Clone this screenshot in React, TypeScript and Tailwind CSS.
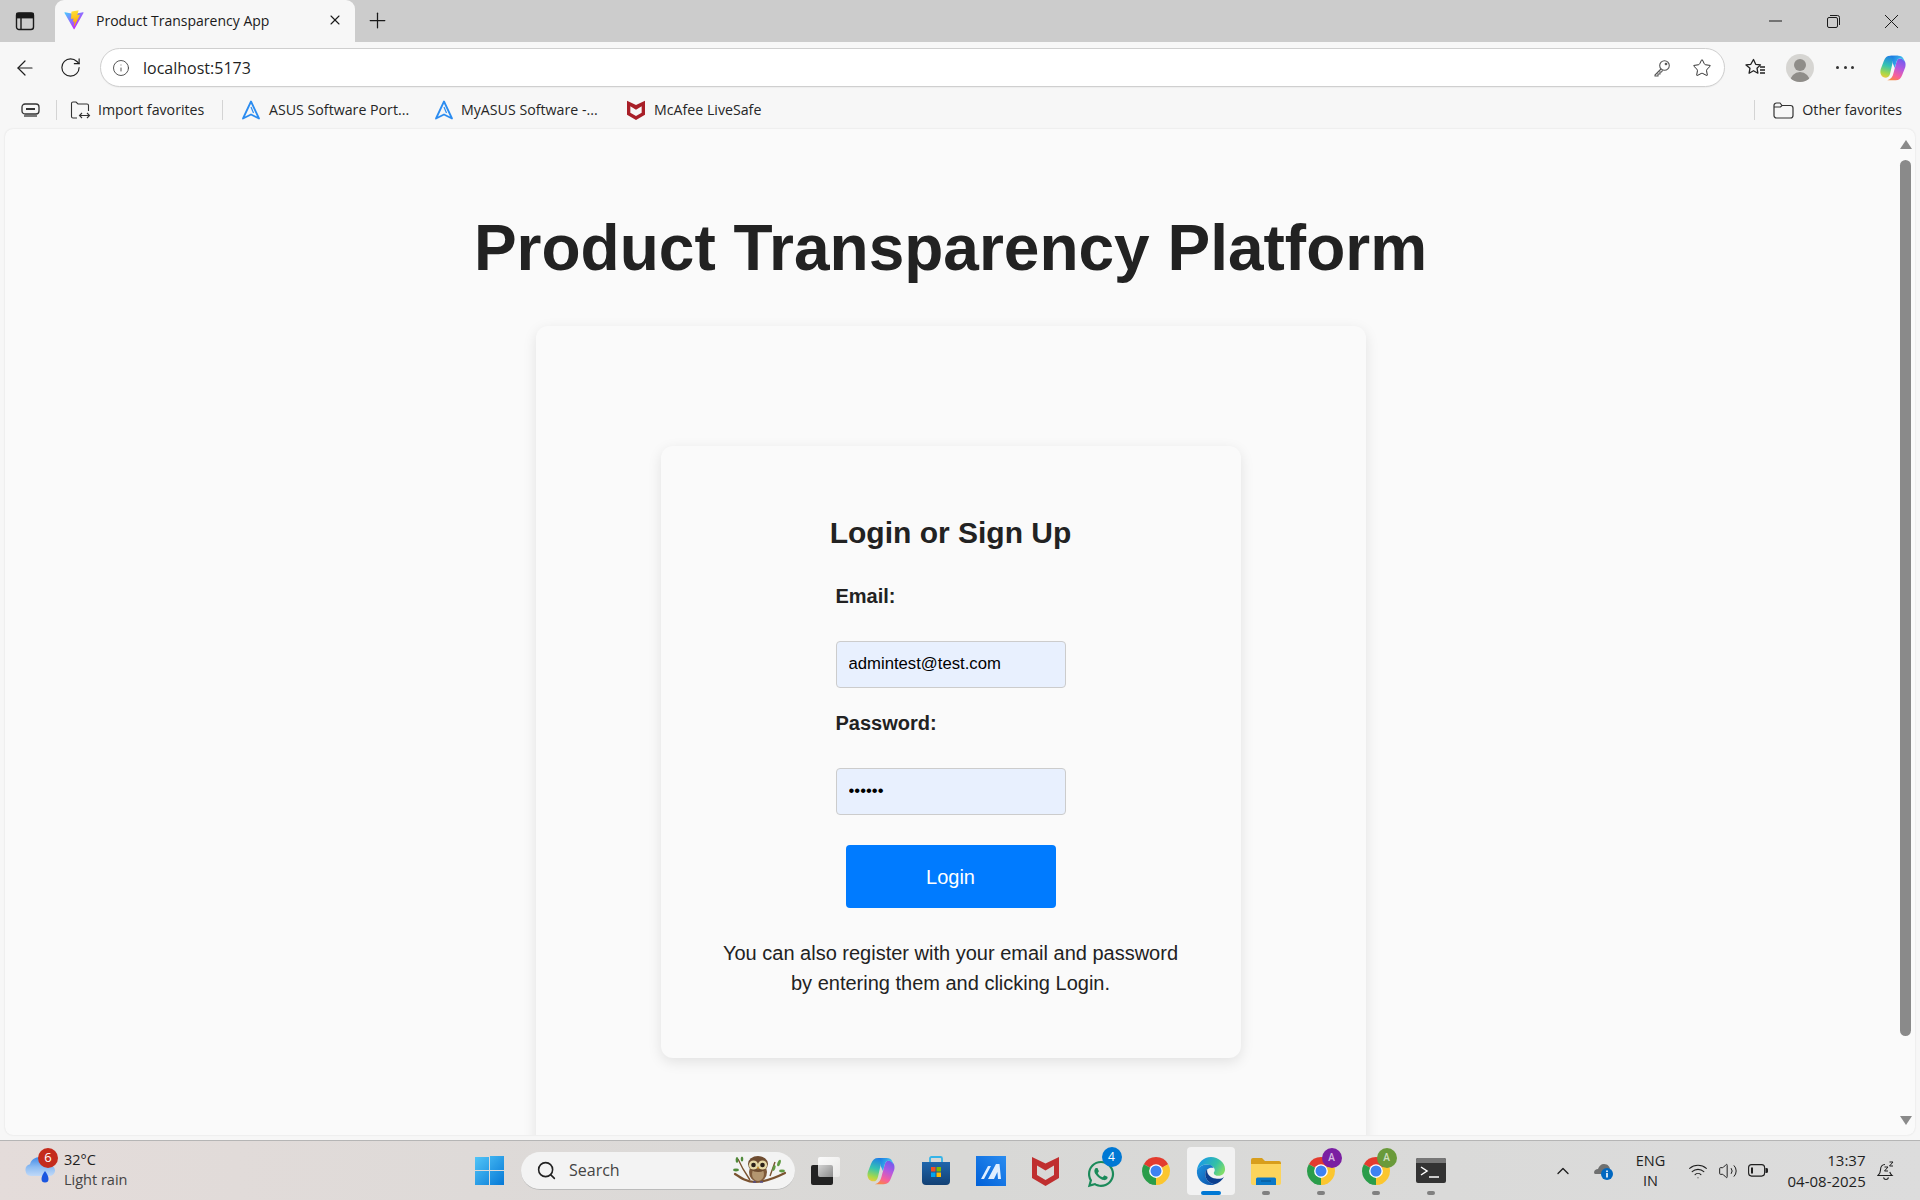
import { ArrowLeft, ChevronUp, Info, Plus, RotateCw, Search, Star, Volume2, Wifi, X } from 'lucide-react';
import { FaWhatsapp } from 'react-icons/fa';

const uiFont = 'font-["Open_Sans",sans-serif]';

function ViteLogo() {
  return (
    <svg width="20" height="20" viewBox="0 0 410 404" fill="none">
      <defs>
        <linearGradient id="vite-a" x1="6" y1="33" x2="235" y2="344" gradientUnits="userSpaceOnUse">
          <stop stopColor="#41D1FF" />
          <stop offset="1" stopColor="#BD34FE" />
        </linearGradient>
        <linearGradient id="vite-b" x1="194" y1="8" x2="236" y2="292" gradientUnits="userSpaceOnUse">
          <stop stopColor="#FFEA83" />
          <stop offset="0.08" stopColor="#FFDD35" />
          <stop offset="1" stopColor="#FFA800" />
        </linearGradient>
      </defs>
      <path d="M399.641 59.5246L215.643 388.545C211.844 395.338 202.084 395.378 198.228 388.618L10.5817 59.5563C6.38087 52.1896 12.6802 43.2665 21.0281 44.7586L205.223 77.6824C206.398 77.8924 207.601 77.8904 208.776 77.6763L389.119 44.8058C397.439 43.2894 403.768 52.1434 399.641 59.5246Z" fill="url(#vite-a)" />
      <path d="M292.965 1.5744L156.801 28.2552C154.563 28.6937 152.906 30.5903 152.771 32.8664L144.395 174.33C144.198 177.662 147.258 180.248 150.51 179.498L188.42 170.749C191.967 169.931 195.172 173.055 194.443 176.622L183.18 231.775C182.422 235.487 185.907 238.661 189.532 237.56L212.947 230.446C216.577 229.344 220.065 232.527 219.297 236.242L201.398 322.875C200.278 328.294 207.486 331.249 210.492 326.603L212.5 323.5L323.454 102.072C325.312 98.3645 322.108 94.137 318.036 94.9228L279.014 102.454C275.347 103.161 272.227 99.746 273.262 96.1583L298.731 7.86689C299.767 4.27314 296.636 0.855181 292.965 1.5744Z" fill="url(#vite-b)" />
    </svg>
  );
}

function CopilotLogo({ size, id }: { size: number; id: string }) {
  return (
    <svg width={size} height={size} viewBox="0 0 32 32" fill="none">
      <defs>
        <linearGradient id={`${id}-a`} x1="12" y1="2" x2="5" y2="27" gradientUnits="userSpaceOnUse">
          <stop stopColor="#1f7fe8" />
          <stop offset="0.45" stopColor="#35c4b0" />
          <stop offset="0.8" stopColor="#a8d848" />
          <stop offset="1" stopColor="#f0c83c" />
        </linearGradient>
        <linearGradient id={`${id}-b`} x1="26" y1="5" x2="14" y2="30" gradientUnits="userSpaceOnUse">
          <stop stopColor="#6a5cf0" />
          <stop offset="0.4" stopColor="#b458e0" />
          <stop offset="0.75" stopColor="#f8609a" />
          <stop offset="1" stopColor="#f88a3c" />
        </linearGradient>
        <linearGradient id={`${id}-c`} x1="13" y1="2" x2="27" y2="9" gradientUnits="userSpaceOnUse">
          <stop stopColor="#1670e0" />
          <stop offset="1" stopColor="#46c8f0" />
        </linearGradient>
      </defs>
      <path d="M13 2C9 2 7 4 5.500 8L2 17c-1.500 5 1 10 6 10 2.500 0 4-1.500 4.800-5L15.500 10C16 6 18 3 22 2z" fill={`url(#${id}-a)`} />
      <path d="M19 30c4 0 6-2 7.500-6l3.500-9c1.500-5-1-10-6-10-2.500 0-3.500 2-4.300 5L16.500 22c-.8 4-3 7-7 8z" fill={`url(#${id}-b)`} />
      <path d="M13 2h9c3 0 5 1 6 3.500.4 1 .8 2 1.200 3.500C28 6.500 26 5 24 5c-2.500 0-3.500 2-4.300 5L18 16l-2.500-6C16 6 16.500 3 13 2z" fill={`url(#${id}-c)`} />
    </svg>
  );
}

function ChromeLogo() {
  return (
    <svg width="30" height="30" viewBox="0 0 48 48">
      <path d="M24 24 L43.5 13 A22.5 22.5 0 0 0 4.5 13 Z" fill="#e33b2e" />
      <path d="M24 24 L4.5 13 A22.5 22.5 0 0 0 24 46.5 Z" fill="#2a9d4a" />
      <path d="M24 24 L24 46.5 A22.5 22.5 0 0 0 43.5 13 Z" fill="#fbc62f" />
      <circle cx="24" cy="24" r="11" fill="#fff" />
      <circle cx="24" cy="24" r="8.8" fill="#3e82f1" />
    </svg>
  );
}

function EdgeLogo() {
  return (
    <svg width="30" height="30" viewBox="0 0 32 32" fill="none">
      <defs>
        <linearGradient id="edge-a" x1="6" y1="4" x2="28" y2="18" gradientUnits="userSpaceOnUse">
          <stop stopColor="#1b9de2" />
          <stop offset="0.6" stopColor="#35c1a5" />
          <stop offset="1" stopColor="#7fdc6a" />
        </linearGradient>
        <linearGradient id="edge-b" x1="4" y1="12" x2="22" y2="30" gradientUnits="userSpaceOnUse">
          <stop stopColor="#1b8ad8" />
          <stop offset="1" stopColor="#0b4fa8" />
        </linearGradient>
      </defs>
      <path d="M1 15C2 7 8 1 16 1c8 0 15 6 15 13 0 4-3 7-7 7-3 0-5-1-5-3 0-1 1-1 1-3 0-3-4-6-8-6-5 0-9 2-11 6z" fill="url(#edge-a)" />
      <path d="M1 15c2-4 6-6 11-6 3 0 6 1 7 4-3-1-8 0-9 5-1 6 4 11 10 12-2 1-3 1-5 1C7 31 0 24 1 15z" fill="url(#edge-b)" />
      <path d="M20 30c-6-1-11-6-10-12 0-2 1-3 2-4-1 5 3 9 9 10 3 1 7 0 9-2-2 4-6 7-10 8z" fill="#0c3f8f" />
    </svg>
  );
}

// red shield with the M notch, used in the favorites bar and the taskbar
function McAfeeLogo({ size, color }: { size: number; color: string }) {
  return (
    <svg width={size * 0.9} height={size} viewBox="0 0 27 30">
      <path fillRule="evenodd" d="M0 1l13.500 6.500L27 1v21L13.500 30 0 22zM5 9.500V19l8.500 5 8.500-5V9.500l-8.500 5z" fill={color} />
    </svg>
  );
}

function ChromeBadge({ color }: { color: string }) {
  return (
    <div className="relative flex h-[30px] w-[30px] items-center justify-center">
      <ChromeLogo />
      <span className={`absolute top-[-8px] right-[-6px] flex h-[20px] w-[20px] items-center justify-center rounded-full text-[10px] font-semibold text-white/70 ${color}`}>A</span>
    </div>
  );
}

function AsusMark() {
  return (
    <svg width="20" height="20" viewBox="0 0 20 20" fill="none" stroke="#2b8cf0" strokeWidth="1.8" strokeLinejoin="round">
      <path d="M10 1.500 18 18.500 10 14.500 2 18.500Z" />
      <path d="M10 7 12.500 13" strokeWidth="1.2" />
    </svg>
  );
}

function OwlDoodle() {
  return (
    <svg width="54" height="30" viewBox="0 0 54 30" fill="none">
      <path d="M2 19c6 4 12 8 20 8 10 0 20-4 30-9" stroke="#7a5230" strokeWidth="2.200" strokeLinecap="round" />
      <path d="M5 4l5 10 7 11M42 7l-5 14" stroke="#7a5230" strokeWidth="1.400" />
      <ellipse cx="4" cy="5" rx="1.400" ry="3" fill="#4f8a3a" />
      <ellipse cx="9" cy="4" rx="1.300" ry="2.600" fill="#4f8a3a" />
      <ellipse cx="3" cy="15" rx="3" ry="1.400" fill="#4f8a3a" />
      <ellipse cx="46" cy="8" rx="1.500" ry="3.500" fill="#5f9a42" transform="rotate(20 46 8)" />
      <ellipse cx="41" cy="13" rx="1.400" ry="3" fill="#5f9a42" transform="rotate(20 41 13)" />
      <ellipse cx="49" cy="16" rx="3" ry="1.400" fill="#5f9a42" />
      <ellipse cx="25" cy="17" rx="9" ry="10" fill="#7f5a3a" />
      <ellipse cx="25" cy="19" rx="6" ry="7" fill="#b39670" />
      <ellipse cx="25" cy="9" rx="10" ry="8" fill="#6e4c30" />
      <circle cx="20.500" cy="10" r="4.600" fill="#e6d9a6" />
      <circle cx="29.500" cy="10" r="4.600" fill="#e6d9a6" />
      <circle cx="20.500" cy="10" r="2.300" fill="#2a2018" />
      <circle cx="29.500" cy="10" r="2.300" fill="#2a2018" />
      <path d="M24 12h2l-1 3z" fill="#d8a030" />
      <path d="M20 27h3M27 27h3" stroke="#54508c" strokeWidth="1.600" />
    </svg>
  );
}

function TaskbarSlot({ children, active, running }: { children: React.ReactNode; active?: boolean; running?: boolean }) {
  return (
    <div className="relative flex h-[60px] w-[55px] items-center justify-center">
      {active && <div className="absolute top-[6px] left-[3.5px] h-[48px] w-[48px] rounded-[4px] bg-[#f2f2f2]" />}
      <div className="relative">{children}</div>
      {active && <div className="absolute top-[50px] left-[17.5px] h-[4px] w-[20px] rounded-full bg-[#0078d4]" />}
      {running && <div className="absolute top-[50px] left-[23.5px] h-[4px] w-[8px] rounded-full bg-[#808080]" />}
    </div>
  );
}

function BrowserChrome() {
  return (
    <>
      {/* tab strip */}
      <div className="flex h-[42px] items-stretch bg-[#cccccc] text-[#1a1a1a]">
        <div className="flex w-[55px] items-center pl-[15px]">
          <svg width="20" height="20" viewBox="0 0 20 20" fill="none" stroke="#1a1a1a" strokeWidth="1.4">
            <rect x="1.500" y="2" width="17" height="16.500" rx="2.500" />
            <path d="M1.500 6.500h17M6 6.500v12" />
            <rect x="2" y="2.500" width="16" height="4" fill="#1a1a1a" />
          </svg>
        </div>
        <div className="flex w-[300px] items-center rounded-t-[9px] bg-[#f7f7f7] pb-[2px] pl-[9px]">
          <ViteLogo />
          <span className={`ml-[12px] text-[14px] ${uiFont}`}>Product Transparency App</span>
          <X className="ml-auto mr-[12px]" size={16} strokeWidth={1.6} />
        </div>
        <div className="flex w-[44px] items-center justify-center pb-[2px]">
          <Plus size={25} strokeWidth={1.2} />
        </div>
        <div className="ml-auto flex items-center">
          <svg className="mr-[45px]" width="13" height="2" viewBox="0 0 13 2"><path d="M0 1h13" stroke="#1a1a1a" /></svg>
          <svg className="mr-[45px]" width="13" height="13" viewBox="0 0 13 13" fill="none" stroke="#1a1a1a">
            <rect x="0.500" y="2.500" width="10" height="10" rx="1.500" />
            <path d="M3 .5h7.500a2 2 0 0 1 2 2V10" />
          </svg>
          <svg className="mr-[22px]" width="13" height="13" viewBox="0 0 13 13" stroke="#1a1a1a"><path d="M0 0l13 13M13 0L0 13" /></svg>
        </div>
      </div>

      {/* address bar */}
      <div className="flex h-[50px] items-center bg-[#f7f7f7] pt-[1px]">
        <ArrowLeft className="ml-[13px]" size={24} strokeWidth={1.2} color="#1f1f1f" />
        <RotateCw className="ml-[22px]" size={23} strokeWidth={1.2} color="#1f1f1f" />
        <div className="ml-[18px] flex h-[39px] w-[1625px] items-center rounded-full border border-[#cfcfcf] bg-white shadow-[0_1px_1px_rgba(0,0,0,0.04)]">
          <Info className="ml-[11px]" size={18} strokeWidth={1.2} color="#444" />
          <span className={`ml-[13px] text-[16px] text-[#1f1f1f] ${uiFont}`}>localhost:5173</span>
          <svg className="ml-auto" width="18" height="18" viewBox="0 0 18 18" fill="none" stroke="#555" strokeWidth="1.1">
            <circle cx="11.500" cy="6.500" r="4.800" />
            <circle cx="13" cy="5" r="0.800" />
            <path d="M8 10 2 16v1h3v-2h2v-2h1.500l1-1.600" />
          </svg>
          <Star className="ml-[21px] mr-[12px]" size={20} strokeWidth={1.2} color="#333" />
        </div>
        <svg className="ml-[20px]" width="21" height="20" viewBox="0 0 21 20" fill="none" stroke="#222" strokeWidth="1.3" strokeLinejoin="round">
          <path d="M8.500 1.500l2.200 4.800 4.800.6-3.500 3.300.9 5-4.400-2.500-4.400 2.500.9-5L1 6.900l4.800-.6z" />
          <path d="M15 9h5M15 12h5M15 15h5" />
        </svg>
        <div className="relative ml-[20px] h-[28px] w-[28px] overflow-hidden rounded-full bg-[#d6d5d2]">
          <div className="absolute top-[5px] left-[8px] h-[12px] w-[12px] rounded-full bg-[#8f8d89]" />
          <div className="absolute top-[18px] left-[4px] h-[14px] w-[20px] rounded-t-full bg-[#8f8d89]" />
        </div>
        <div className="ml-[22px] flex w-[18px] justify-between">
          <span className="h-[3px] w-[3px] rounded-full bg-[#333]" />
          <span className="h-[3px] w-[3px] rounded-full bg-[#333]" />
          <span className="h-[3px] w-[3px] rounded-full bg-[#333]" />
        </div>
        <div className="ml-[25px]">
          <CopilotLogo size={28} id="cp-top" />
        </div>
      </div>

      {/* favorites bar */}
      <div className={`flex h-[37px] items-center bg-[#f7f7f7] pb-[2px] text-[14.2px] text-[#262626] ${uiFont}`}>
        <svg className="ml-[21px]" width="19" height="14" viewBox="0 0 19 14" fill="none" stroke="#333" strokeWidth="1.3">
          <rect x="1" y="1" width="17" height="10" rx="3" />
          <path d="M5 6h9" strokeWidth="2" />
          <path d="M3 13h13" />
        </svg>
        <div className="ml-[16px] h-[20px] w-px bg-[#d4d4d4]" />
        <svg className="ml-[13px]" width="21" height="20" viewBox="0 0 21 20" fill="none" stroke="#333" strokeWidth="1.1">
          <path d="M7 18H3a1.500 1.500 0 0 1-1.500-1.500v-13A1.500 1.500 0 0 1 3 2h3l2 2h9a1.500 1.500 0 0 1 1.500 1.500V11" />
          <path d="M10 15.500h9M12 13l-2.500 2.500L12 18M17 13l2.500 2.500L17 18" />
        </svg>
        <span className="ml-[7px] w-[105px] whitespace-nowrap">Import favorites</span>
        <div className="ml-[19px] h-[20px] w-px bg-[#d4d4d4]" />
        <div className="ml-[18px]"><AsusMark /></div>
        <span className="ml-[8px] w-[140px] whitespace-nowrap">ASUS Software Port...</span>
        <div className="ml-[25px]"><AsusMark /></div>
        <span className="ml-[7px] w-[140px] whitespace-nowrap">MyASUS Software -...</span>
        <div className="ml-[25px] flex w-[20px] justify-center"><McAfeeLogo size={20} color="#a81f28" /></div>
        <span className="ml-[8px] whitespace-nowrap">McAfee LiveSafe</span>
        <div className="ml-auto h-[20px] w-px bg-[#d4d4d4]" />
        <svg className="ml-[18px]" width="21" height="18" viewBox="0 0 21 18" fill="none" stroke="#333" strokeWidth="1.2">
          <path d="M1 4.500A2.500 2.500 0 0 1 3.500 2H7l2 2.500h8.500A2.500 2.500 0 0 1 20 7v7.500a2.500 2.500 0 0 1-2.500 2.500h-14A2.500 2.500 0 0 1 1 14.500z" />
          <path d="M1 6h6.500L9 4.500" />
        </svg>
        <span className="ml-[8px] mr-[18px] whitespace-nowrap">Other favorites</span>
      </div>
    </>
  );
}

function LoginCard() {
  return (
    <div className="mx-auto mt-[120px] flex h-[612px] w-[580px] flex-col items-center rounded-[12px] bg-[#fafafa] shadow-[0_4px_14px_rgba(0,0,0,0.1)]">
      <h2 className="mt-[68px] text-[30px] leading-[38px] font-bold text-[#222]">Login or Sign Up</h2>
      <form className="mt-[32px] flex w-[230px] flex-col">
        <label className="text-[20px] leading-[24px] font-bold text-[#222]">Email:</label>
        <input
          readOnly
          value="admintest@test.com"
          className="mt-[33px] h-[47px] rounded-[4px] border border-[#ccc] bg-[#e8f0fe] pb-[2px] pl-[12px] text-[16.7px] text-black outline-none"
        />
        <label className="mt-[23px] text-[20px] leading-[24px] font-bold text-[#222]">Password:</label>
        <input
          readOnly
          type="password"
          value="123456"
          className="mt-[33px] h-[47px] rounded-[4px] border border-[#ccc] bg-[#e8f0fe] pb-[2px] pl-[12px] text-[16.7px] text-black outline-none"
        />
        <button type="button" className="mx-auto mt-[30px] h-[63px] w-[210px] rounded-[4px] bg-[#007bff] text-[20px] text-white">
          Login
        </button>
      </form>
      <p className="mt-[30px] w-[470px] text-center text-[20px] leading-[30px] text-[#222]">
        You can also register with your email and password by entering them and clicking Login.
      </p>
    </div>
  );
}

function PageArea() {
  return (
    <div className="mx-[5px] mb-[5px] flex h-[1006px] overflow-hidden rounded-[8px] bg-[#fafafa] shadow-[0_0_2px_rgba(0,0,0,0.12)] font-['Liberation_Sans',sans-serif]">
      <div className="h-[1006px] flex-1 overflow-hidden">
        <h1 className="mt-[81px] text-center text-[64px] leading-[77px] font-bold text-[#222]">Product Transparency Platform</h1>
        <div className="mx-auto mt-[39px] h-[900px] w-[830px] overflow-hidden rounded-[12px] bg-[#fafafa] px-[10px] shadow-[0_4px_14px_rgba(0,0,0,0.1)]">
          <LoginCard />
        </div>
      </div>
      <div className="flex w-[19px] flex-col items-center">
        <div className="mt-[11px] h-0 w-0 border-x-[6.5px] border-b-[9px] border-x-transparent border-b-[#8a8a8a]" />
        <div className="mt-[11px] h-[876px] w-[11px] rounded-full bg-[#8a8a8a]" />
        <div className="mt-[80px] h-0 w-0 border-x-[6.5px] border-t-[9px] border-x-transparent border-t-[#8a8a8a]" />
      </div>
    </div>
  );
}

function Taskbar() {
  return (
    <div className={`flex h-[60px] items-center border-t border-[#b5b5b5] bg-gradient-to-r from-[#e4dcda] via-[#d8d8d6] to-[#dcdcdc] text-[#1f1f1f] ${uiFont}`}>
      {/* weather */}
      <div className="relative ml-[25px] w-[30px]">
        <svg width="30" height="27" viewBox="0 0 30 27">
          <defs>
            <linearGradient id="cloud" x1="0" y1="0" x2="0" y2="20" gradientUnits="userSpaceOnUse">
              <stop stopColor="#3f8ae8" />
              <stop offset="0.5" stopColor="#8dbcf2" />
              <stop offset="1" stopColor="#c6dcf8" />
            </linearGradient>
          </defs>
          <path d="M6 19a6 6 0 0 1-1-11.800C6 3 10 0 15 0c5 0 9 3 10 8a5.500 5.500 0 0 1-1 11z" fill="url(#cloud)" />
          <path d="M20 14c2 3 3.500 5 3.500 8a3.500 3.500 0 0 1-7 0c0-3 1.500-5 3.500-8z" fill="#1a56e0" />
        </svg>
        <span className="absolute top-[-9px] left-[13px] flex h-[20px] w-[20px] items-center justify-center rounded-full bg-[#c42b1c] text-[13px] text-white">6</span>
      </div>
      <div className="ml-[9px] w-[84px] pb-[2px] text-[14.5px] leading-[20px]">
        <div>32°C</div>
        <div className="text-[#444]">Light rain</div>
      </div>

      {/* start */}
      <div className="ml-[314px] flex w-[55px] justify-center">
        <svg width="29" height="29" viewBox="0 0 29 29">
          <defs>
            <linearGradient id="win" x1="0" y1="0" x2="29" y2="29" gradientUnits="userSpaceOnUse">
              <stop stopColor="#52c6f8" />
              <stop offset="1" stopColor="#0678d6" />
            </linearGradient>
          </defs>
          <path d="M0 1h14v13H0zM15 0h14v14H15zM0 15h14v14H0zM15 15h14v14H15z" fill="url(#win)" />
        </svg>
      </div>

      {/* search */}
      <div className="ml-[4px] flex h-[38px] w-[274px] items-center rounded-full border-b border-[#bbb] bg-[#f3f3f3]">
        <Search className="ml-[15px]" size={21} strokeWidth={1.8} color="#222" />
        <span className="ml-[12px] text-[16px] text-[#444]">Search</span>
        <div className="ml-auto mr-[8px] flex"><OwlDoodle /></div>
      </div>

      {/* pinned apps */}
      <div className="ml-[3px] flex">
        <TaskbarSlot>
          <div className="relative h-[28px] w-[30px]">
            <div className="absolute top-[8px] left-0 h-[20px] w-[22px] rounded-[2px] bg-[#222]" />
            <div className="absolute top-0 left-[7px] h-[20px] w-[22px] rounded-[2px] bg-gradient-to-br from-white/90 to-white/40" />
          </div>
        </TaskbarSlot>
        <TaskbarSlot><CopilotLogo size={30} id="cp-bar" /></TaskbarSlot>
        <TaskbarSlot>
          <svg width="30" height="30" viewBox="0 0 30 30">
            <defs>
              <linearGradient id="store" x1="0" y1="6" x2="0" y2="30" gradientUnits="userSpaceOnUse">
                <stop stopColor="#1f66ac" />
                <stop offset="1" stopColor="#123f72" />
              </linearGradient>
            </defs>
            <path d="M9 6V2.500A1.500 1.500 0 0 1 10.500 1h9A1.500 1.500 0 0 1 21 2.500V6" fill="none" stroke="#35b4e8" strokeWidth="1.800" />
            <path d="M1 6h28v19a4 4 0 0 1-4 4H5a4 4 0 0 1-4-4z" fill="url(#store)" />
            <path d="M10 11h4.500v4.500H10z" fill="#f25022" />
            <path d="M15.500 11H20v4.500h-4.500z" fill="#7fba00" />
            <path d="M10 16.500h4.500V21H10z" fill="#00a4ef" />
            <path d="M15.500 16.500H20V21h-4.500z" fill="#ffb900" />
          </svg>
        </TaskbarSlot>
        <TaskbarSlot>
          <svg width="30" height="30" viewBox="0 0 30 30">
            <defs>
              <linearGradient id="myasus" x1="0" y1="30" x2="30" y2="0" gradientUnits="userSpaceOnUse">
                <stop stopColor="#0060d8" />
                <stop offset="1" stopColor="#2a8cf0" />
              </linearGradient>
            </defs>
            <rect width="30" height="30" fill="url(#myasus)" />
            <path d="M5 23l7-13h3l-7 13zM12 23l8-15h3.500l1.500 15h-3l-.6-7-3.400 7z" fill="#dfeeff" />
          </svg>
        </TaskbarSlot>
        <TaskbarSlot><McAfeeLogo size={30} color="#c02f2f" /></TaskbarSlot>
        <TaskbarSlot>
          <div className="relative mt-[6px]">
            <FaWhatsapp size={30} color="#1b8a5a" />
            <span className="absolute top-[-12px] right-[-6px] flex h-[20px] w-[20px] items-center justify-center rounded-full bg-[#0078d4] text-[12px] text-white">4</span>
          </div>
        </TaskbarSlot>
        <TaskbarSlot><ChromeLogo /></TaskbarSlot>
        <TaskbarSlot active><EdgeLogo /></TaskbarSlot>
        <TaskbarSlot running>
          <svg width="30" height="28" viewBox="0 0 30 28">
            <path d="M0 3a2 2 0 0 1 2-2h9l3 3h14a2 2 0 0 1 2 2v3H0z" fill="#d89e1c" />
            <path d="M0 7h30v19a2 2 0 0 1-2 2H2a2 2 0 0 1-2-2z" fill="#fcd45c" />
            <path d="M5 22a1.500 1.500 0 0 1 1.500-1.500h17A1.500 1.500 0 0 1 25 22v6H5z" fill="#0a78c8" />
            <path d="M10 24h10" stroke="#05508c" />
          </svg>
        </TaskbarSlot>
        <TaskbarSlot running><ChromeBadge color="bg-[#7a1fa2]" /></TaskbarSlot>
        <TaskbarSlot running><ChromeBadge color="bg-[#6a9a3a]" /></TaskbarSlot>
        <TaskbarSlot running>
          <svg width="30" height="25" viewBox="0 0 30 25">
            <rect width="30" height="25" rx="2" fill="#333" />
            <path d="M0 2a2 2 0 0 1 2-2h26a2 2 0 0 1 2 2v3H0z" fill="#777" />
            <path d="M5 9l6 4-6 4" fill="none" stroke="#fff" strokeWidth="1.500" />
            <path d="M13 19h10" stroke="#fff" strokeWidth="1.500" />
          </svg>
        </TaskbarSlot>
      </div>

      {/* tray */}
      <ChevronUp className="ml-[94.5px]" size={20} strokeWidth={1.6} color="#1f1f1f" />
      <svg className="ml-[20px]" width="21" height="18" viewBox="0 0 21 18">
        <path d="M1 11c0-3 2-4 4-4 1-3 3-5 6-5 4 0 6 3 6 6v4H5c-2 0-4 0-4-1z" fill="#6f7070" />
        <circle cx="14" cy="12" r="6" fill="#0067c0" />
        <rect x="13.200" y="11" width="1.600" height="4.500" fill="#fff" />
        <rect x="13.200" y="8.500" width="1.600" height="1.600" fill="#fff" />
      </svg>
      <div className="ml-[21px] w-[32px] text-center text-[14.5px] leading-[20px]">
        <div>ENG</div>
        <div>IN</div>
      </div>
      <Wifi className="ml-[21px]" size={20} strokeWidth={1.3} color="#1f1f1f" />
      <Volume2 className="ml-[10px]" size={20} strokeWidth={1.2} color="#1f1f1f" />
      <svg className="ml-[10px]" width="20" height="13" viewBox="0 0 20 13" fill="none" stroke="#1f1f1f" strokeWidth="1.100">
        <rect x="0.600" y="0.600" width="16" height="11.500" rx="3" />
        <rect x="3" y="3.500" width="2" height="6" fill="#1f1f1f" stroke="none" />
        <path d="M18 4.500a2 2 0 0 1 0 4z" fill="#1f1f1f" />
      </svg>
      <div className="ml-[20px] w-[78px] whitespace-nowrap text-right text-[15px] leading-[21px]">
        <div>13:37</div>
        <div>04-08-2025</div>
      </div>
      <svg className="ml-[11px]" width="18" height="20" viewBox="0 0 18 20" fill="none" stroke="#1f1f1f" strokeWidth="1.100">
        <path d="M8 3.500C5 3.500 3.500 6 3.500 9c0 2.500-1 4-2.500 5.500h14c-1.200-1-1.800-2-2.200-3.500" />
        <path d="M6.500 16.500c.3 1.200 1.200 2 2.500 2s2.200-.8 2.500-2" />
        <path d="M7.500 6h3.500l-3.500 4H11M12.500 1H16l-3.500 4H16" strokeWidth="1" />
      </svg>
    </div>
  );
}

export default function App() {
  return (
    <div className="h-[1200px] w-[1920px] overflow-hidden bg-[#f7f7f7]">
      <BrowserChrome />
      <PageArea />
      <Taskbar />
    </div>
  );
}
